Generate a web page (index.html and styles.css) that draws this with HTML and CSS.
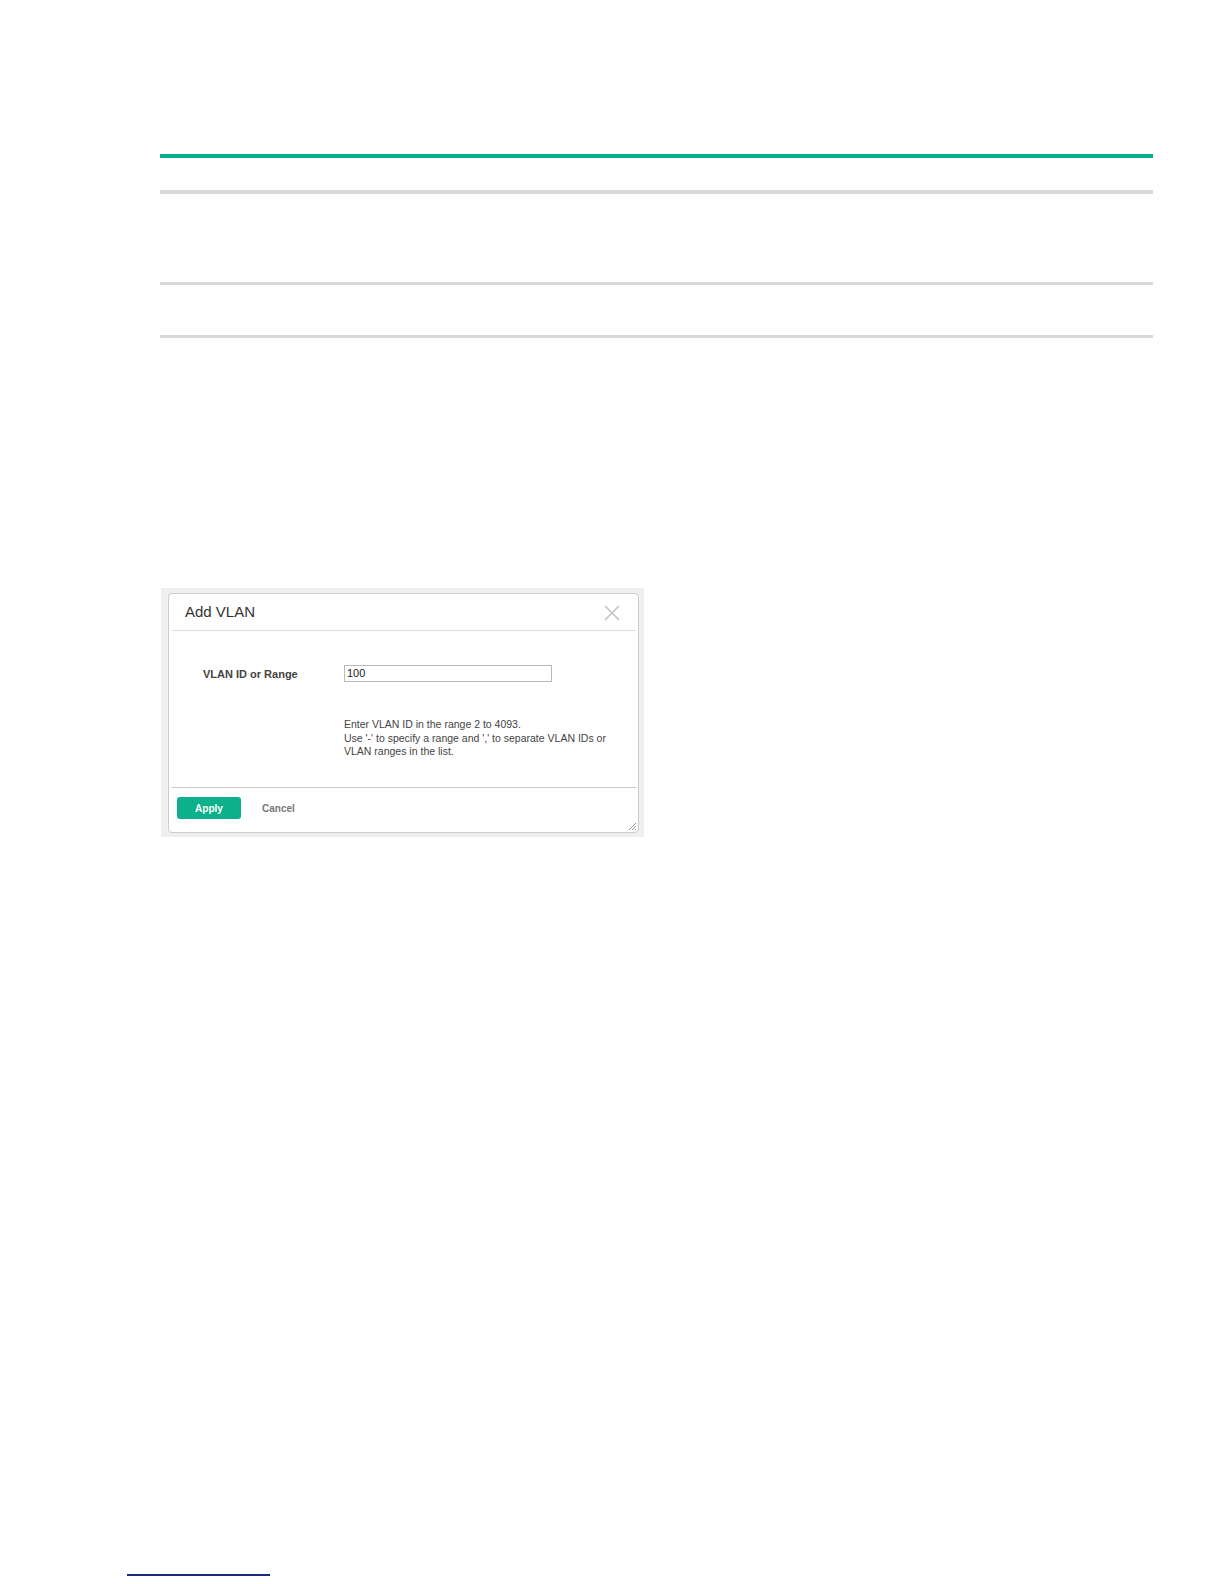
FILE: index.html
```html
<html>
    <head>
        <link rel="stylesheet" href="styles.css">
    </head>
    <body>
        <div class="page">
            <div class="rule rule-green"></div>
            <div class="rule rule-grey rule-1"></div>
            <div class="rule rule-grey rule-2"></div>
            <div class="rule rule-grey rule-3"></div>

            <div class="shot">
                <div class="dialog">
                    <div class="dialog-head">
                        <span class="dialog-title">Add VLAN</span>
                        <svg class="dialog-close" width="16" height="16" viewBox="0 0 16 16">
                            <path d="M1 1 L15 15 M15 1 L1 15" stroke="#c4c4c4" stroke-width="1.7" fill="none"/>
                        </svg>
                    </div>
                    <div class="dialog-sep"></div>
                    <div class="dialog-body">
                        <div class="field">
                            <label class="field-label">VLAN ID or Range</label>
                            <div class="field-input">100</div>
                        </div>
                        <p class="field-help">
                            Enter VLAN ID in the range 2 to 4093.<br>
                            Use '-' to specify a range and ',' to separate VLAN IDs or<br>
                            VLAN ranges in the list.
                        </p>
                    </div>
                    <div class="dialog-sep footer-sep"></div>
                    <div class="dialog-foot">
                        <button class="btn-apply">Apply</button>
                        <span class="btn-cancel">Cancel</span>
                    </div>
                    <svg class="grip" width="8" height="8" viewBox="0 0 8 8">
                        <path d="M1 8 L8 1 M4 8 L8 4 M7 8 L8 7" stroke="#999" stroke-width="1" fill="none"/>
                    </svg>
                </div>
            </div>

            <a class="page-link" href="#"></a>
        </div>
    </body>
</html>
```

FILE: styles.css
```css
body
{
    margin: 0;
    background: white;
    font-family: "Liberation Sans", Arial, sans-serif;
}
.page
{
    width: 1224px;
    padding-top: 154px;
}
.rule
{
    margin-left: 160px;
    width: 993px;
}
.rule-green
{
    height: 4px;
    background-color: #07b08a;
}
.rule-grey
{
    background-color: #d9d9d9;
}
.rule-1
{
    margin-top: 32px;
    height: 4px;
}
.rule-2
{
    margin-top: 88px;
    height: 3px;
}
.rule-3
{
    margin-top: 50px;
    height: 3px;
}

/* screenshot of the dialog */
.shot
{
    margin-top: 250px;
    margin-left: 161px;
    width: 483px;
    height: 249px;
    box-sizing: border-box;
    padding: 5px 5px 4px 7px;
    background-color: #efefef;
}
.dialog
{
    position: relative;
    height: 240px;
    box-sizing: border-box;
    background: white;
    border: 1px solid #cdcdcd;
    border-radius: 4px;
    display: flex;
    flex-direction: column;
}
.dialog-head
{
    height: 36px;
    display: flex;
    align-items: center;
    justify-content: space-between;
    padding: 0 18px 0 16px;
}
.dialog-title
{
    font-size: 15px;
    line-height: 18px;
    color: #333;
}
.dialog-close
{
    margin-top: 2px;
}
.dialog-sep
{
    height: 1px;
    margin: 0 2px 0 3px;
    background-color: #dcdcdc;
}
.footer-sep
{
    background-color: #c9c9c9;
}
.dialog-body
{
    height: 156px;
    box-sizing: border-box;
    padding: 34px 0 0 34px;
}
.field
{
    display: flex;
    align-items: center;
}
.field-label
{
    width: 141px;
    font-size: 11px;
    font-weight: bold;
    color: #444;
}
.field-input
{
    width: 208px;
    height: 17px;
    box-sizing: border-box;
    border: 1px solid #b9b9b9;
    padding: 0 2px;
    font-size: 11px;
    line-height: 15px;
    color: #222;
}
.field-help
{
    margin: 36px 0 0 141px;
    font-size: 10.5px;
    line-height: 13.5px;
    color: #444;
}
.dialog-foot
{
    display: flex;
    align-items: center;
    gap: 21px;
    padding: 9px 0 0 8px;
}
.btn-apply
{
    width: 64px;
    height: 22px;
    border: none;
    border-radius: 3px;
    background-color: #0cb08b;
    color: white;
    font-family: "Liberation Sans", Arial, sans-serif;
    font-size: 10px;
    font-weight: bold;
}
.btn-cancel
{
    font-size: 10px;
    font-weight: bold;
    color: #777;
}
.grip
{
    position: absolute;
    right: 2px;
    bottom: 2px;
}
.page-link
{
    display: block;
    margin: 737px 0 0 127px;
    width: 143px;
    border-bottom: 2px solid #1c2a80;
}
```
